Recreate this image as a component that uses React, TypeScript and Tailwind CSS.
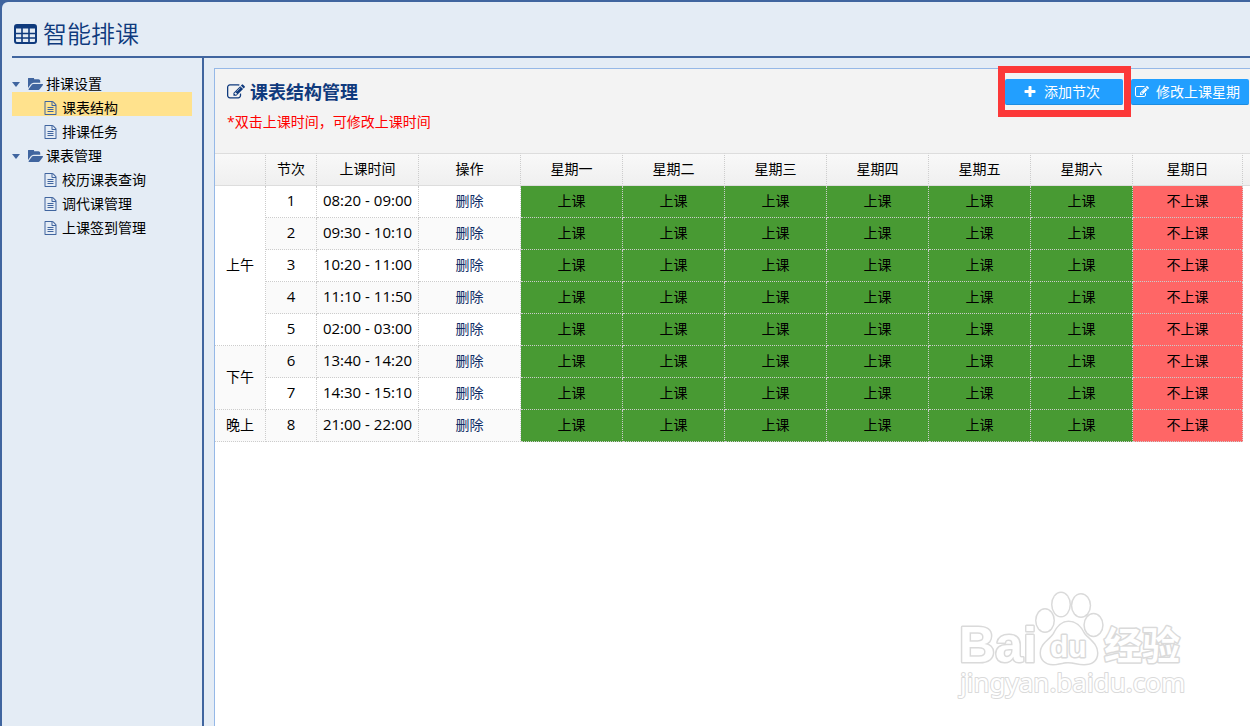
import React from "react";

type IconProps = { className?: string };

function EditIcon({ className }: IconProps) {
  return (
    <svg viewBox="0 0 1792 1792" fill="currentColor" className={className} aria-hidden="true">
      <path d="M888 1184l116-116-152-152-116 116v56h96v96h56zm440-720q-16-16-33 1l-350 350q-17 17-1 33t33-1l350-350q17-17 1-33zm80 594v190q0 119-84.5 203.5t-203.5 84.5h-832q-119 0-203.5-84.5t-84.5-203.5v-832q0-119 84.5-203.5t203.5-84.5h832q63 0 117 25 15 7 18 23 3 17-9 29l-49 49q-14 14-32 8-23-6-45-6h-832q-66 0-113 47t-47 113v832q0 66 47 113t113 47h832q66 0 113-47t47-113v-126q0-13 9-22l64-64q15-15 35-7t20 29zm-96-738l288 288-672 672h-288v-288zm444 132l-92 92-288-288 92-92q28-28 68-28t68 28l152 152q28 28 28 68t-28 68z" />
    </svg>
  );
}

function PlusIcon({ className }: IconProps) {
  return (
    <svg viewBox="0 0 1792 1792" fill="currentColor" className={className} aria-hidden="true">
      <path d="M1600 736v192q0 40-28 68t-68 28h-416v416q0 40-28 68t-68 28h-192q-40 0-68-28t-28-68v-416h-416q-40 0-68-28t-28-68v-192q0-40 28-68t68-28h416v-416q0-40 28-68t68-28h192q40 0 68 28t28 68v416h416q40 0 68 28t28 68z" />
    </svg>
  );
}

function FileIcon({ className }: IconProps) {
  return (
    <svg viewBox="0 0 1792 1792" fill="currentColor" className={className} aria-hidden="true">
      <path d="M1596 380q28 28 48 76t20 88v1152q0 40-28 68t-68 28h-1344q-40 0-68-28t-28-68v-1600q0-40 28-68t68-28h896q40 0 88 20t76 48zm-444-244v376h376q-10-29-22-41l-313-313q-12-12-41-22zm384 1528v-1024h-416q-40 0-68-28t-28-68v-416h-768v1536h1280zm-1024-864q0-14 9-23t23-9h704q14 0 23 9t9 23v64q0 14-9 23t-23 9h-704q-14 0-23-9t-9-23v-64zm736 224q14 0 23 9t9 23v64q0 14-9 23t-23 9h-704q-14 0-23-9t-9-23v-64q0-14 9-23t23-9h704zm0 256q14 0 23 9t9 23v64q0 14-9 23t-23 9h-704q-14 0-23-9t-9-23v-64q0-14 9-23t23-9h704z" />
    </svg>
  );
}

function FolderIcon({ className }: IconProps) {
  return (
    <svg viewBox="0 256 1880 1280" preserveAspectRatio="none" fill="currentColor" className={className} aria-hidden="true">
      <path d="M1879 952q0 31-31 66l-336 396q-43 51-120.5 86.5t-143.5 35.5h-1088q-34 0-60.5-13t-26.5-43q0-31 31-66l336-396q43-51 120.5-86.5t143.5-35.5h1088q34 0 60.5 13t26.5 43zm-343-344v160h-832q-94 0-197 47.5t-164 119.5l-337 396-5 6q0-4-.5-12.5t-.5-12.5v-960q0-92 66-158t158-66h320q92 0 158 66t66 158v32h544q92 0 158 66t66 158z" />
    </svg>
  );
}

function TableIcon({ className }: IconProps) {
  return (
    <svg viewBox="0 0 23 20" fill="none" stroke="currentColor" className={className} aria-hidden="true">
      <rect x="1" y="1" width="21" height="18" rx="2" strokeWidth="2" />
      <path d="M1 3h21" strokeWidth="3" />
      <path d="M1 9.5h21M1 14h21M8 3v16M15 3v16" strokeWidth="1.6" />
    </svg>
  );
}

function Watermark() {
  return (
    <svg
      viewBox="0 0 260 130"
      className="pointer-events-none absolute bottom-[16px] right-[50px] h-[130px] w-[260px]"
      fill="#fff"
      stroke="#dadada"
      strokeWidth="3"
      strokeLinejoin="round"
      aria-hidden="true"
    >
      <g style={{ paintOrder: "stroke" }}>
        <text x="19" y="82" fontSize="50" className="font-['Liberation_Sans',sans-serif] font-bold">Bai</text>
        <ellipse cx="105" cy="40.5" rx="8.5" ry="11" />
        <ellipse cx="121" cy="24.5" rx="8.5" ry="11.5" />
        <ellipse cx="141" cy="25.5" rx="8.7" ry="11" />
        <ellipse cx="153.5" cy="45" rx="8.7" ry="10.7" />
        <path d="M128.5 42C137 42 141 48 144 54C149 60 157 64 157 73C157 81 151 84 144 84C138 84 134 82 128 82C122 82 119 84 113 84C105 84 101 79 101 73C101 64 109 61 114 54C117 48 121 42 128.5 42Z" />
        <text x="110" y="77" fontSize="30" className="font-['Liberation_Sans',sans-serif] font-bold">du</text>
        <text x="164" y="79" fontSize="38" className="font-['Noto_Sans_CJK_SC',sans-serif] font-bold">经验</text>
        <text x="20" y="112" fontSize="26" strokeWidth="2" className="font-['Noto_Sans',sans-serif]">jingyan.baidu.com</text>
      </g>
    </svg>
  );
}

const menu = [
  { title: "排课设置", items: ["课表结构", "排课任务"] },
  { title: "课表管理", items: ["校历课表查询", "调代课管理", "上课签到管理"] },
];

function Sidebar({ active, onSelect }: { active: string; onSelect: (name: string) => void }) {
  return (
    <nav className="w-[192px] shrink-0 border-r-2 border-[#40659f] pt-[10px] pr-[10px]">
      {menu.map((group) => (
        <section key={group.title}>
          <button type="button" className="flex h-6 w-full items-center pt-2 leading-5 text-black">
            <span className="border-x-4 border-t-[5px] border-x-transparent border-t-[#40659f]" />
            <FolderIcon className="ml-2 h-3 w-[15px] text-[#40659f]" />
            <span className="ml-[3px]">{group.title}</span>
          </button>
          <ul>
            {group.items.map((item) => (
              <li key={item}>
                <a
                  href="#"
                  onClick={(e) => {
                    e.preventDefault();
                    onSelect(item);
                  }}
                  className={`flex h-6 items-center gap-1 pl-[31px] pt-2 leading-5 text-black ${item === active ? "bg-[#ffe28d]" : ""}`}
                >
                  <FileIcon className="h-[14px] w-[15px] text-[#40659f]" />
                  {item}
                </a>
              </li>
            ))}
          </ul>
        </section>
      ))}
    </nav>
  );
}

const days = ["星期一", "星期二", "星期三", "星期四", "星期五", "星期六", "星期日"];

const periods = [
  { label: "上午", times: ["08:20 - 09:00", "09:30 - 10:10", "10:20 - 11:00", "11:10 - 11:50", "02:00 - 03:00"] },
  { label: "下午", times: ["13:40 - 14:20", "14:30 - 15:10"] },
  { label: "晚上", times: ["21:00 - 22:00"] },
];

const rows = periods
  .flatMap((p) => p.times.map((time, i) => ({ time, period: i === 0 ? p : null })))
  .map((row, i) => ({ ...row, index: i + 1 }));

const headCell = "h-[33px] border-y border-r border-y-[#dddddd] border-r-[#cccccc] [border-right-style:dotted] p-0 pb-px font-normal";
const cell = "h-8 border-b border-r border-dotted border-[#cccccc] p-0 pb-px";

function Schedule() {
  return (
    <table className="w-full table-fixed border-separate border-spacing-0 text-center">
      <colgroup>
        <col className="w-[51px]" />
        <col className="w-[51px]" />
        <col className="w-[102px]" />
        <col className="w-[102px]" />
        {days.map((day) => (
          <col key={day} className={day === "星期日" ? "w-[110px]" : ""} />
        ))}
        <col className="w-[7px]" />
      </colgroup>
      <thead className="bg-linear-to-b from-[#f9f9f9] to-[#efefef]">
        <tr>
          <th className={headCell} />
          {["节次", "上课时间", "操作", ...days].map((name) => (
            <th key={name} scope="col" className={headCell}>
              {name}
            </th>
          ))}
          <th className="border-y border-[#dddddd] p-0" />
        </tr>
      </thead>
      <tbody>
        {rows.map(({ index, time, period }) => {
          const tone = index % 2 === 0 ? "bg-[#fafafa]" : "bg-white";
          return (
            <tr key={index}>
              {period && (
                <th scope="rowgroup" rowSpan={period.times.length} className={`${cell} ${tone} font-normal`}>
                  {period.label}
                </th>
              )}
              <td className={`${cell} ${tone} text-[15px]`}>{index}</td>
              <td className={`${cell} ${tone} whitespace-nowrap text-[15px]`}>{time}</td>
              <td className={`${cell} ${tone}`}>
                <a href="#" className="text-[#0f2d66]">删除</a>
              </td>
              {days.map((day) => (
                <td key={day} className={`${cell} ${day === "星期日" ? "bg-[#ff6666]" : "bg-[#489a33]"}`}>
                  {day === "星期日" ? "不上课" : "上课"}
                </td>
              ))}
              <td className="p-0" />
            </tr>
          );
        })}
      </tbody>
    </table>
  );
}

const actionButton =
  "flex h-[26px] w-[118px] items-center justify-center gap-[7px] rounded-xs border-b border-[#1c8ce0] bg-[#229fff] pr-[5px] text-white";

export default function App() {
  const [active, setActive] = React.useState("课表结构");
  return (
    <div className="min-h-screen bg-[#40659f] pl-[2px] pt-[2px] font-['Open_Sans','Noto_Sans_CJK_SC',sans-serif] text-sm text-black">
      <div className="relative flex min-h-[calc(100vh-2px)] flex-col rounded-tl-md bg-[#e4ecf5] pl-[10px]">
        <header className="flex h-14 items-center gap-[6px] border-b-2 border-[#40659f] pl-[2px] pt-[10px] text-[#0f3a7d]">
          <TableIcon className="h-5 w-[23px]" />
          <h1 className="text-2xl leading-8 font-[350]">智能排课</h1>
        </header>
        <div className="flex flex-1">
          <Sidebar active={active} onSelect={setActive} />
          <main className="ml-[10px] mt-[10px] min-w-0 flex-1 border-l border-t border-[#95b8e7] bg-white">
            <div className="flex h-[84px] items-start justify-between bg-[#f3f3f3] pl-3 pr-px pt-[10px]">
              <div className="pt-px">
                <h2 className="flex items-center gap-[5px] text-lg leading-6 font-bold text-[#0f3a7d]">
                  <EditIcon className="h-[18px] w-[18px]" />
                  课表结构管理
                </h2>
                <p className="mt-2 leading-5 text-[#ff0000]">*双击上课时间，可修改上课时间</p>
              </div>
              <div className="flex gap-2">
                <div className="relative">
                  <button type="button" className={actionButton}>
                    <PlusIcon className="h-[14px] w-[14px]" />
                    添加节次
                  </button>
                  <div className="pointer-events-none absolute -left-[7px] -right-2 -top-[13px] -bottom-3 border-[7px] border-[#fc3838]" />
                </div>
                <button type="button" className={actionButton}>
                  <EditIcon className="h-[14px] w-[14px]" />
                  修改上课星期
                </button>
              </div>
            </div>
            <Schedule />
          </main>
        </div>
        <Watermark />
      </div>
    </div>
  );
}
